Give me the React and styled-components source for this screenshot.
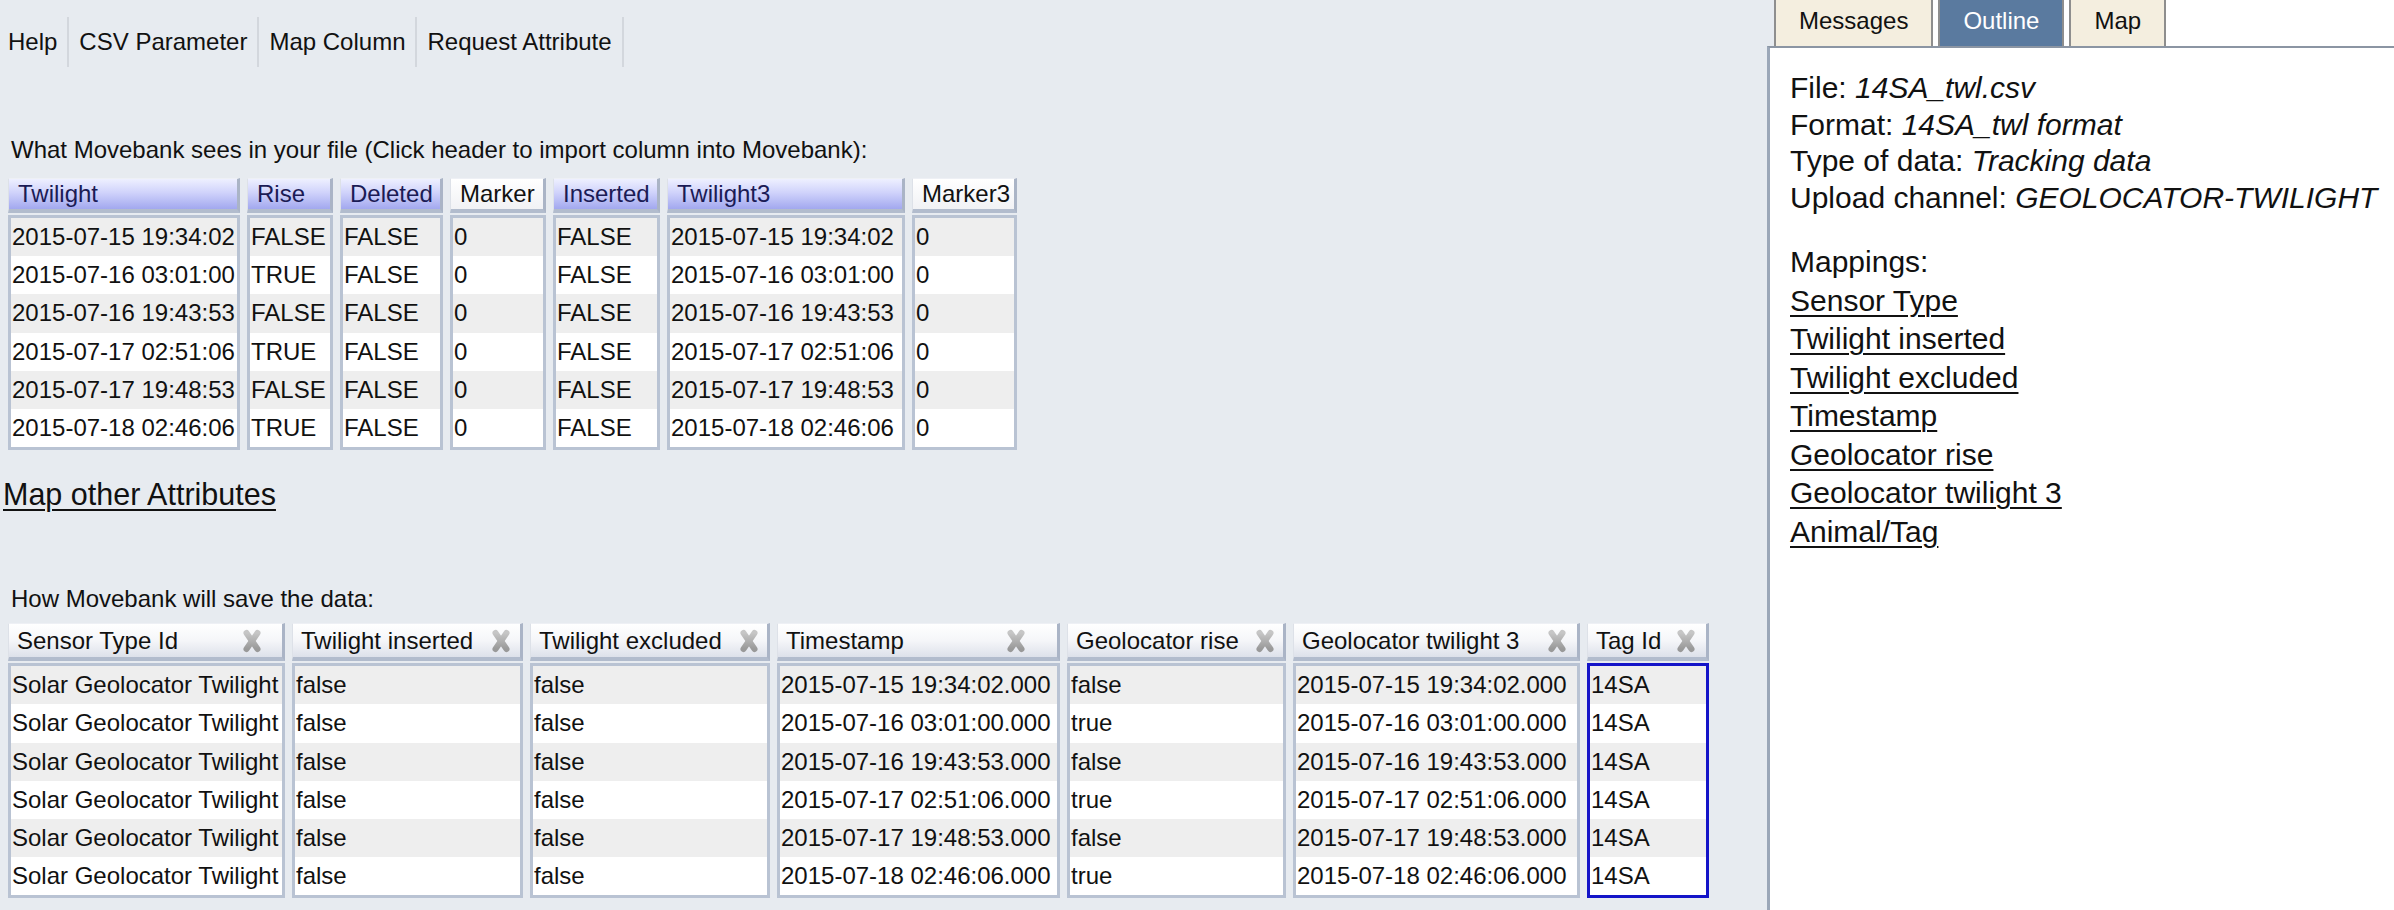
import React from 'react';
import styled, { createGlobalStyle } from 'styled-components';

const GlobalStyle = createGlobalStyle`
  html, body { margin: 0; padding: 0; background: #e7ebf0; }
  body {
    font-family: "Liberation Sans", Arial, Helvetica, sans-serif;
    font-size: 24px;
    color: #111;
  }
  #root { width: 2394px; height: 910px; overflow: hidden; }
`;

const Page = styled.div`
  display: flex;
  width: 2394px;
  height: 910px;
  overflow: hidden;
`;

const Main = styled.main`
  flex: 1;
  min-width: 0;
  display: flex;
  flex-direction: column;
  padding-left: 8px;
`;

const Toolbar = styled.nav`
  display: flex;
  align-items: stretch;
  height: 50px;
  margin-top: 17px;
  margin-left: -8px;
`;

const ToolItem = styled.div`
  display: flex;
  align-items: center;
  padding: 0 10px;
  border-right: 2px solid #d3d7dd;
  &:first-child { padding-left: 8px; }
`;

const Caption = styled.div`
  margin-top: ${p => p.$top}px;
  padding-left: 3px;
  line-height: 28px;
`;

const MapLink = styled.a`
  margin-top: 26px;
  margin-left: -5px;
  align-self: flex-start;
  font-size: 30.5px;
  line-height: 37px;
  color: #111;
  text-decoration: underline;
  text-decoration-thickness: 2px;
  text-underline-offset: 4px;
  cursor: pointer;
`;

const Grid = styled.div`
  display: flex;
  align-items: flex-start;
  gap: 7px;
  margin-top: ${p => p.$top}px;
`;

const Column = styled.div`
  width: ${p => p.$w}px;
  flex: none;
  display: flex;
  flex-direction: column;
  gap: 2px;
`;

const Header = styled.div`
  height: ${p => p.$h}px;
  box-sizing: border-box;
  display: flex;
  align-items: center;
  padding-left: ${p => p.$padL}px;
  padding-right: ${p => p.$padR || 0}px;
  border-top: 1px solid #eef0f5;
  border-left: 1px solid #dde1e8;
  border-right: 3px solid #aab4c6;
  border-bottom: 4px solid #b2bccd;
  white-space: nowrap;
  overflow: hidden;
  background: ${p => p.$tone === 'mapped'
    ? 'linear-gradient(#eef0ff 0%, #d0d3fb 45%, #a2a8ef 100%)'
    : p.$tone === 'save'
      ? 'linear-gradient(#ffffff 0%, #f5f6f9 50%, #dde1ea 100%)'
      : 'linear-gradient(#ffffff, #f1f2f5)'};
  color: ${p => p.$tone === 'mapped' ? '#1b1b55' : '#111'};
`;

const HeaderLabel = styled.span`
  flex: 1;
  min-width: 0;
`;

const Body = styled.div`
  border: 3px solid ${p => p.$selected ? '#1414c8' : '#b9c3d3'};
  background: #fff;
`;

const Cell = styled.div`
  height: ${p => p.$h}px;
  line-height: ${p => p.$h}px;
  padding-left: ${p => p.$padL}px;
  white-space: nowrap;
  overflow: hidden;
  background: ${p => p.$odd ? '#eeeeee' : '#ffffff'};
`;

const Side = styled.aside`
  width: 627px;
  flex: none;
  display: flex;
  flex-direction: column;
`;

const TabBar = styled.div`
  display: flex;
  gap: 5px;
  height: 46px;
  margin-left: 7px;
  background: #fff;
`;

const Tab = styled.div`
  padding: 0 23px;
  line-height: 42px;
  border-left: 2px solid #8e8e8e;
  border-right: 2px solid #8e8e8e;
  background: ${p => p.$active ? '#5a7a9f' : '#f4eedf'};
  color: ${p => p.$active ? '#fff' : '#111'};
`;

const Content = styled.div`
  flex: 1;
  background: #fff;
  border-top: 2px solid #8b95a3;
  border-left: 3px solid #9ba7b8;
  padding: 22px 0 0 20px;
  font-size: 30px;
`;

const InfoLine = styled.div`
  line-height: 36.5px;
  white-space: nowrap;
  & em { font-style: italic; }
`;

const Mappings = styled.div`
  margin-top: 27px;
  display: flex;
  flex-direction: column;
  align-items: flex-start;
`;

const MapLabel = styled.div`
  line-height: 38.5px;
`;

const MapItem = styled.a`
  line-height: 38.5px;
  color: #111;
  text-decoration: underline;
  text-decoration-thickness: 2px;
  text-underline-offset: 4px;
  cursor: pointer;
`;

const CloseIcon = () => (
  <svg width="20" height="24" viewBox="0 0 20 24" aria-hidden="true">
    <defs>
      <linearGradient id="xg" x1="0" y1="0" x2="0" y2="1">
        <stop offset="0" stopColor="#c6c6c6" />
        <stop offset="1" stopColor="#999999" />
      </linearGradient>
    </defs>
    <g stroke="url(#xg)" strokeWidth="6" strokeLinecap="round">
      <line x1="4.5" y1="4" x2="15.5" y2="20" />
      <line x1="15.5" y1="4" x2="4.5" y2="20" />
    </g>
  </svg>
);

const tw1 = ['2015-07-15 19:34:02', '2015-07-16 03:01:00', '2015-07-16 19:43:53', '2015-07-17 02:51:06', '2015-07-17 19:48:53', '2015-07-18 02:46:06'];
const rise = ['FALSE', 'TRUE', 'FALSE', 'TRUE', 'FALSE', 'TRUE'];
const six = v => Array(6).fill(v);

const fileColumns = [
  { title: 'Twilight', w: 232, tone: 'mapped', values: tw1 },
  { title: 'Rise', w: 86, tone: 'mapped', values: rise },
  { title: 'Deleted', w: 103, tone: 'mapped', values: six('FALSE') },
  { title: 'Marker', w: 96, tone: 'plain', values: six('0') },
  { title: 'Inserted', w: 107, tone: 'mapped', values: six('FALSE') },
  { title: 'Twilight3', w: 238, tone: 'mapped', values: tw1 },
  { title: 'Marker3', w: 105, tone: 'plain', values: six('0') },
];

const ts = tw1.map(t => t + '.000');
const lower = rise.map(r => r.toLowerCase());

const saveColumns = [
  { title: 'Sensor Type Id', w: 277, padR: 20, values: six('Solar Geolocator Twilight') },
  { title: 'Twilight inserted', w: 231, padR: 9, values: six('false') },
  { title: 'Twilight excluded', w: 240, padR: 8, values: six('false') },
  { title: 'Timestamp', w: 283, padR: 31, values: ts },
  { title: 'Geolocator rise', w: 219, padR: 8, values: lower },
  { title: 'Geolocator twilight 3', w: 287, padR: 10, values: ts },
  { title: 'Tag Id', w: 122, padR: 10, values: six('14SA'), selected: true },
];

const mappings = ['Sensor Type', 'Twilight inserted', 'Twilight excluded', 'Timestamp', 'Geolocator rise', 'Geolocator twilight 3', 'Animal/Tag'];

export default function App() {
  return (
    <>
      <GlobalStyle />
      <Page>
        <Main>
          <Toolbar>
            {['Help', 'CSV Parameter', 'Map Column', 'Request Attribute'].map(t => (
              <ToolItem key={t}>{t}</ToolItem>
            ))}
          </Toolbar>

          <Caption $top={69}>What Movebank sees in your file (Click header to import column into Movebank):</Caption>
          <Grid $top={14}>
            {fileColumns.map(c => (
              <Column key={c.title} $w={c.w}>
                <Header $h={35} $padL={9} $tone={c.tone}>
                  <HeaderLabel>{c.title}</HeaderLabel>
                </Header>
                <Body>
                  {c.values.map((v, i) => (
                    <Cell key={i} $h={38.2} $padL={1} $odd={i % 2 === 0}>{v}</Cell>
                  ))}
                </Body>
              </Column>
            ))}
          </Grid>

          <MapLink>Map other Attributes</MapLink>

          <Caption $top={72}>How Movebank will save the data:</Caption>
          <Grid $top={10}>
            {saveColumns.map(c => (
              <Column key={c.title} $w={c.w}>
                <Header $h={38} $padL={8} $padR={c.padR} $tone="save">
                  <HeaderLabel>{c.title}</HeaderLabel>
                  <CloseIcon />
                </Header>
                <Body $selected={c.selected}>
                  {c.values.map((v, i) => (
                    <Cell key={i} $h={38.2} $padL={1} $odd={i % 2 === 0}>{v}</Cell>
                  ))}
                </Body>
              </Column>
            ))}
          </Grid>
        </Main>

        <Side>
          <TabBar>
            <Tab>Messages</Tab>
            <Tab $active>Outline</Tab>
            <Tab>Map</Tab>
          </TabBar>
          <Content>
            <InfoLine>File: <em>14SA_twl.csv</em></InfoLine>
            <InfoLine>Format: <em>14SA_twl format</em></InfoLine>
            <InfoLine>Type of data: <em>Tracking data</em></InfoLine>
            <InfoLine>Upload channel: <em>GEOLOCATOR-TWILIGHT</em></InfoLine>
            <Mappings>
              <MapLabel>Mappings:</MapLabel>
              {mappings.map(m => <MapItem key={m}>{m}</MapItem>)}
            </Mappings>
          </Content>
        </Side>
      </Page>
    </>
  );
}
